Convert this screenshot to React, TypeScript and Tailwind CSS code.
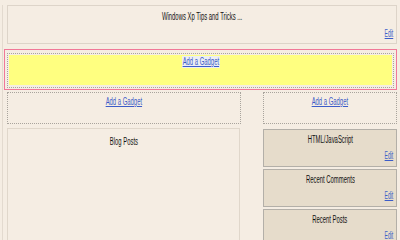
const FONT = "font-['Liberation_Sans',Arial,sans-serif]";

function Squish({
  children,
  origin = "center",
  className = "",
}: {
  children: React.ReactNode;
  origin?: "center" | "right";
  className?: string;
}) {
  return (
    <span
      className={`inline-block whitespace-nowrap scale-x-[0.59] ${origin === "right" ? "origin-right" : "origin-center"} ${className}`}
    >
      {children}
    </span>
  );
}

function AddGadget({ highlight = false }: { highlight?: boolean }) {
  return (
    <div className="text-center text-[10px] leading-[12px]">
      <a href="#" className="text-[#3c5cc8]">
        <Squish className={`underline ${highlight ? "bg-[#eceef4] px-[1px]" : ""}`}>Add a Gadget</Squish>
      </a>
    </div>
  );
}

function Edit() {
  return (
    <div className="text-right text-[10px] leading-[12px]">
      <a href="#" className="text-[#3c5cc8]">
        <span className="inline-block origin-right scale-x-[0.5] whitespace-nowrap underline">Edit</span>
      </a>
    </div>
  );
}

function SideBox({ title }: { title: string }) {
  return (
    <div className="h-[38px] border border-[#b3afa8] bg-[#e6dccb] px-[3px] pt-[4px]">
      <div className="text-center text-[10px] leading-[12px] text-[#111]">
        <Squish>{title}</Squish>
      </div>
      <div className="mt-[4px]">
        <Edit />
      </div>
    </div>
  );
}

export default function App() {
  return (
    <div className={`h-[240px] w-[400px] overflow-hidden bg-[#f5ede3] ${FONT}`}>
      <div className="ml-[2px] h-full border-l border-[#e3dacf]">
        {/* header */}
        <div className="ml-[4px] mr-[3px] mt-[5px] h-[39px] border border-[#ddd4c9] px-[3px] pt-[5px]">
          <div className="text-center text-[10px] leading-[12px] text-[#111]">
            <Squish>Windows Xp Tips and Tricks ...</Squish>
          </div>
          <div className="mt-[5px]">
            <Edit />
          </div>
        </div>

        {/* selected gadget area */}
        <div className="ml-[1px] mr-[3px] mt-[5px] border border-[#f07898] px-[2px] pb-[1px] pt-[3px]">
          <div className="border border-dotted border-[#a9a49d] p-[1px] pb-[2px]">
            <div className="h-[30px] bg-[#ffff80] pt-[1px]">
              <AddGadget highlight />
            </div>
          </div>
        </div>

        <div className="ml-[4px] mr-[3px] mt-[2px] flex justify-between">
          <div className="w-[234px]">
            <div className="h-[32px] border border-dotted border-[#a9a49d] pt-[3px]">
              <AddGadget />
            </div>
            <div className="mt-[4px] h-[140px] w-[233px] border border-[#e0d7cb] pt-[7px]">
              <div className="text-center text-[10px] leading-[12px] text-[#111]">
                <Squish>Blog Posts</Squish>
              </div>
            </div>
          </div>

          <div className="w-[134px]">
            <div className="h-[32px] border border-dotted border-[#a9a49d] pt-[3px]">
              <AddGadget />
            </div>
            <div className="mt-[5px] flex flex-col gap-[2px]">
              <SideBox title="HTML/JavaScript" />
              <SideBox title="Recent Comments" />
              <SideBox title="Recent Posts" />
            </div>
          </div>
        </div>
      </div>
    </div>
  );
}
